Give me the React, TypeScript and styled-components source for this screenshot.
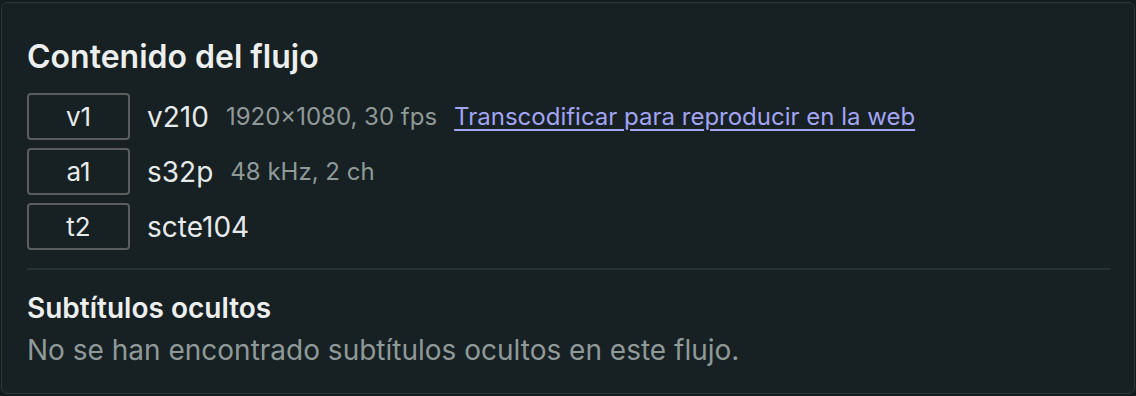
import React from 'react'
import styled, { createGlobalStyle } from 'styled-components'

const GlobalStyle = createGlobalStyle`
  html, body {
    margin: 0;
    padding: 0;
    background: #121b1d;
  }
  body {
    font-family: Inter, "Noto Sans", sans-serif;
    -webkit-font-smoothing: antialiased;
  }
`

const Page = styled.div`
  padding: 2px 1px 2px 1px;
`

const Card = styled.section`
  box-sizing: border-box;
  height: 392px;
  background: #172023;
  border: 1px solid #2b3838;
  border-radius: 6px;
  padding: 35px 24px 0 25px;
`

const Title = styled.h2`
  margin: 0 0 17px;
  font-size: 32px;
  font-weight: 600;
  line-height: 38px;
  color: #ecefee;
`

const StreamList = styled.div`
  display: flex;
  flex-direction: column;
  gap: 8px;
`

const StreamRow = styled.div`
  display: flex;
  align-items: center;
  gap: 17px;
`

const Badge = styled.span`
  box-sizing: border-box;
  width: 103px;
  height: 47px;
  display: inline-flex;
  align-items: center;
  justify-content: center;
  border: 2px solid #5b5e5e;
  border-radius: 4px;
  font-size: 26px;
  color: #e6eaea;
`

const Codec = styled.span`
  font-size: 28px;
  color: #e6eaea;
`

const Details = styled.span`
  font-size: 24px;
  color: #8f9a98;
`

const Link = styled.a`
  font-size: 24px;
  color: #a2a4f4;
  text-decoration: underline;
  text-underline-offset: 4px;
  text-decoration-thickness: 2px;
  cursor: pointer;
`

const Divider = styled.hr`
  margin: 18px 0 0;
  border: 0;
  border-top: 2px solid #263333;
`

const SubTitle = styled.h3`
  margin: 21px 0 0;
  font-size: 28px;
  font-weight: 600;
  line-height: 34px;
  color: #ecefee;
`

const Note = styled.p`
  margin: 8px 0 0;
  font-size: 28px;
  line-height: 34px;
  color: #8f9a98;
`

const streams = [
  { id: 'v1', codec: 'v210', details: '1920×1080, 30 fps', link: 'Transcodificar para reproducir en la web' },
  { id: 'a1', codec: 's32p', details: '48 kHz, 2 ch' },
  { id: 't2', codec: 'scte104' },
]

export default function App() {
  return (
    <>
      <GlobalStyle />
      <Page>
        <Card>
          <Title>Contenido del flujo</Title>
          <StreamList>
            {streams.map((s) => (
              <StreamRow key={s.id}>
                <Badge>{s.id}</Badge>
                <Codec>{s.codec}</Codec>
                {s.details && <Details>{s.details}</Details>}
                {s.link && <Link>{s.link}</Link>}
              </StreamRow>
            ))}
          </StreamList>
          <Divider />
          <SubTitle>Subtítulos ocultos</SubTitle>
          <Note>No se han encontrado subtítulos ocultos en este flujo.</Note>
        </Card>
      </Page>
    </>
  )
}
